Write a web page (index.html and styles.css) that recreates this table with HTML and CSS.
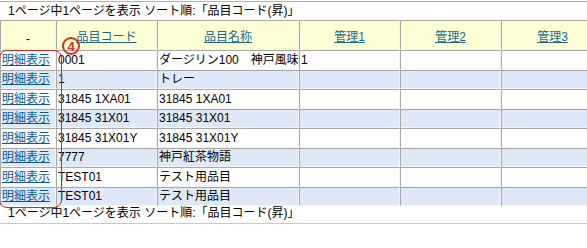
FILE: index.html
```html
<!DOCTYPE html>
<html lang="ja">
<head>
<meta charset="utf-8">
<link rel="stylesheet" href="styles.css">
</head>
<body>
<div class="page">
  <div class="status status-top">1ページ中1ページを表示 ソート順:「品目コード(昇)」</div>
  <div class="grid-wrap">
    <table class="grid">
      <colgroup>
        <col class="c1"><col class="c2"><col class="c3"><col class="c4"><col class="c5"><col class="c6">
      </colgroup>
      <thead>
        <tr>
          <th class="dash">-</th>
          <th><a href="#">品目コード</a></th>
          <th><a href="#">品目名称</a></th>
          <th><a href="#">管理1</a></th>
          <th><a href="#">管理2</a></th>
          <th><a href="#">管理3</a></th>
        </tr>
      </thead>
      <tbody>
        <tr class="odd"><td><a href="#">明細表示</a></td><td>0001</td><td>ダージリン100　神戸風味</td><td>1</td><td></td><td></td></tr>
        <tr class="even"><td><a href="#">明細表示</a></td><td>1</td><td>トレー</td><td></td><td></td><td></td></tr>
        <tr class="odd"><td><a href="#">明細表示</a></td><td>31845 1XA01</td><td>31845 1XA01</td><td></td><td></td><td></td></tr>
        <tr class="even"><td><a href="#">明細表示</a></td><td>31845 31X01</td><td>31845 31X01</td><td></td><td></td><td></td></tr>
        <tr class="odd"><td><a href="#">明細表示</a></td><td>31845 31X01Y</td><td>31845 31X01Y</td><td></td><td></td><td></td></tr>
        <tr class="even"><td><a href="#">明細表示</a></td><td>7777</td><td>神戸紅茶物語</td><td></td><td></td><td></td></tr>
        <tr class="odd"><td><a href="#">明細表示</a></td><td>TEST01</td><td>テスト用品目</td><td></td><td></td><td></td></tr>
        <tr class="even"><td><a href="#">明細表示</a></td><td>TEST01</td><td>テスト用品目</td><td></td><td></td><td></td></tr>
      </tbody>
    </table>
    <div class="mark-box"></div>
    <div class="mark-num">4</div>
  </div>
  <div class="status status-bottom">1ページ中1ページを表示 ソート順:「品目コード(昇)」</div>
</div>
</body>
</html>
```
FILE: styles.css
```css
html, body {
  margin: 0;
  padding: 0;
  background: #ffffff;
}
body {
  font-family: "Liberation Sans", "Noto Sans CJK JP", sans-serif;
  font-size: 12px;
  color: #000000;
  overflow: hidden;
}
.page {
  padding-top: 1px;
  width: 587px;
}
.status {
  height: 18px;
  line-height: 18px;
  padding-left: 8px;
  white-space: nowrap;
}
.status-top {
  border-top: 1px solid #b4b4b4;
}
.status-bottom {
  border-bottom: 1px solid #c8c8c8;
  height: 17px;
  line-height: 14px;
}
.grid-wrap {
  position: relative;
  width: 587px;
}
.grid {
  border-collapse: separate;
  border-spacing: 0;
  table-layout: fixed;
  width: 604px;
}
.c1 { width: 56px; }
.c2 { width: 101px; }
.c3 { width: 142px; }
.c4 { width: 101px; }
.c5 { width: 101px; }
.c6 { width: 103px; }
.grid th,
.grid td {
  border: 1px solid;
  border-color: #a8a8a8 #f4f4f4 #f4f4f4 #a8a8a8;
  padding: 0 1px;
  white-space: nowrap;
  overflow: hidden;
}
.grid th {
  height: 28px;
  background: #ffffd6;
  font-weight: normal;
  text-align: center;
  vertical-align: middle;
}
.grid th a {
  color: #1a6a8c;
  text-decoration: underline;
}
.grid th.dash {
  padding-top: 8px;
  height: 20px;
}
.grid td {
  height: 17.5px;
  line-height: 16px;
  text-align: left;
  vertical-align: middle;
}
.grid td a {
  color: #0b5a94;
  text-decoration: underline;
}
.grid tr.odd td { background: #ffffff; }
.grid tr.even td { background: #dde9f7; }
.mark-box {
  position: absolute;
  left: -1px;
  top: 30px;
  width: 61px;
  height: 156px;
  border: 1px solid #cc2a2a;
  border-radius: 8px;
  pointer-events: none;
}
.mark-num {
  position: absolute;
  left: 62px;
  top: 17px;
  width: 14px;
  height: 14px;
  border: 2px solid #e02a1c;
  border-radius: 50%;
  font-family: "Liberation Sans", sans-serif;
  font-weight: bold;
  font-size: 13px;
  line-height: 15px;
  text-align: center;
  color: #e02a1c;
}
```
